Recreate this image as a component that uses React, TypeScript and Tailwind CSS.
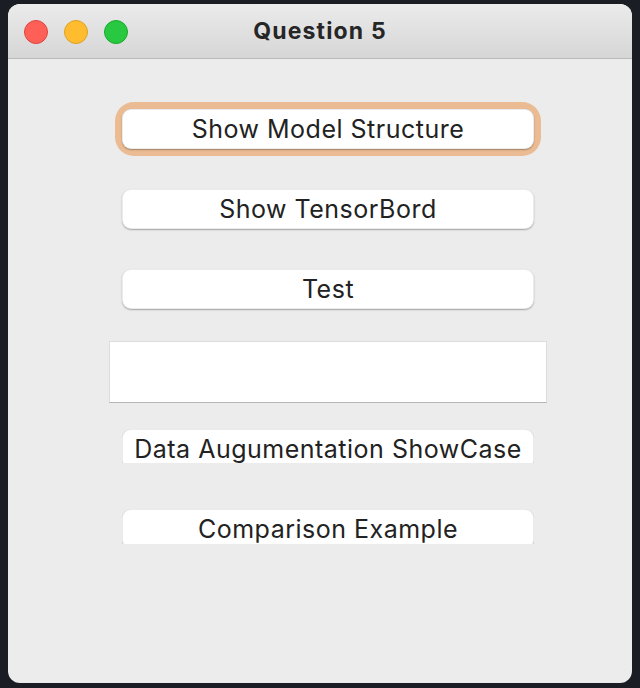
export default function App() {
  const font = { fontFamily: 'Inter, "Noto Sans", sans-serif' };
  const btn =
    "w-[412px] h-[40px] shrink-0 bg-white rounded-[9px] border border-black/[0.08] shadow-[0_1px_1.5px_rgba(0,0,0,0.3)] flex items-center justify-center pt-[2px] text-[25px] tracking-[0.02em] text-[#222222] whitespace-nowrap";
  return (
    <div className="w-[640px] h-[688px] bg-[#1a1d23] flex flex-col" style={font}>
      <div className="flex-1 pl-[8px] pr-[8px] pt-[4px] pb-[5px]">
        <div className="w-[624px] h-[679px] bg-[#ececec] rounded-[12px] overflow-hidden flex flex-col">
          <div className="h-[55px] shrink-0 bg-gradient-to-b from-[#ebebeb] to-[#d6d6d6] border-b border-[#b9b9b9] relative flex items-center justify-center">
            <div className="absolute left-[16px] top-[16px] flex gap-[16px]">
              <div className="w-[24px] h-[24px] rounded-full bg-[#fe5f57] border border-[#e0443e]" />
              <div className="w-[24px] h-[24px] rounded-full bg-[#febc2e] border border-[#dea123]" />
              <div className="w-[24px] h-[24px] rounded-full bg-[#28c840] border border-[#1aab29]" />
            </div>
            <div className="text-[23px] font-bold tracking-[0.05em] text-[#262626] mt-[1px]">Question 5</div>
          </div>
          <div className="flex flex-col items-start">
            <div className="ml-[114px] mt-[50px] rounded-[12px] shadow-[0_0_0_7px_#ebbb93]">
              <div className={btn}>Show Model Structure</div>
            </div>
            <div className={`${btn} ml-[114px] mt-[40px]`}>Show TensorBord</div>
            <div className={`${btn} ml-[114px] mt-[40px]`}>Test</div>
            <div className="ml-[101px] mt-[32px] w-[438px] h-[62px] bg-white border border-[#dcdcdc] border-b-[#b5b5b5]" />
            <div className="ml-[114px] mt-[26px] h-[34px] w-[412px] overflow-hidden">
              <div className={btn}>Data Augumentation ShowCase</div>
            </div>
            <div className="ml-[114px] mt-[46px] h-[35px] w-[412px] overflow-hidden">
              <div className={btn}>Comparison Example</div>
            </div>
          </div>
        </div>
      </div>
    </div>
  );
}
